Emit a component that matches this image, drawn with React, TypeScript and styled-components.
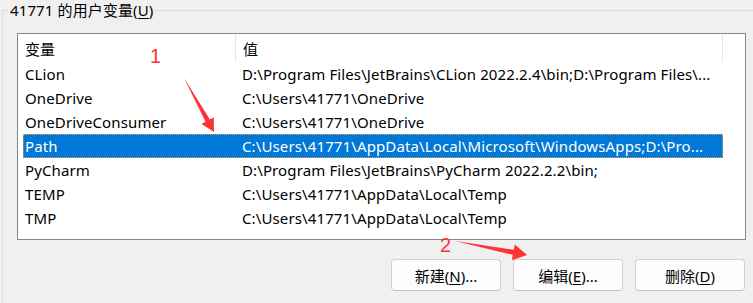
import styled, { createGlobalStyle } from 'styled-components'

const GlobalStyle = createGlobalStyle`
  html, body {
    margin: 0;
    padding: 0;
    background: #f0f0f0;
  }
  body {
    font-family: "Noto Sans", "Noto Sans CJK SC", sans-serif;
    font-size: 15px;
    letter-spacing: 0.12px;
    color: #000;
  }
`

const Page = styled.div`
  position: relative;
  width: 753px;
  height: 303px;
  overflow: hidden;
  background: #f0f0f0;
`

const GroupBox = styled.div`
  margin: 10px 0 0 2px;
  width: 800px;
  height: 300px;
  border-top: 1px solid #dcdcdc;
  border-left: 1px solid #dcdcdc;
`

const Legend = styled.div`
  width: fit-content;
  margin: -11px 0 0 5px;
  padding: 0 2px;
  height: 20px;
  line-height: 20px;
  background: #f0f0f0;
`

const Mnemonic = styled.span`
  text-decoration: underline;
  text-underline-offset: 2px;
`

const ListBox = styled.div`
  margin: 13px 0 0 14px;
  width: 727px;
  height: 205px;
  border: 1px solid #828790;
  background: #fff;
  overflow: hidden;
`

const HeaderRow = styled.div`
  display: flex;
  height: 28px;
  align-items: stretch;
`

const HeaderCell = styled.div<{ $width: number }>`
  width: ${(p) => p.$width}px;
  padding-left: 7px;
  box-sizing: border-box;
  display: flex;
  align-items: center;
  border-right: 1px solid #e5e5e5;
  margin-top: 1px;
`

const Rows = styled.div`
  display: flex;
  flex-direction: column;
  margin-left: 5px;
  width: 700px;
`

const Row = styled.div<{ $selected?: boolean }>`
  display: flex;
  height: 24px;
  align-items: center;
  white-space: nowrap;
  box-sizing: border-box;
  background: ${(p) => (p.$selected ? '#0078d7' : 'transparent')};
  color: ${(p) => (p.$selected ? '#fff' : '#000')};
  outline: ${(p) => (p.$selected ? '1px dotted #f2a03c' : 'none')};
  outline-offset: -1px;
`

const NameCell = styled.div`
  width: 219px;
  padding-left: 2px;
  box-sizing: border-box;
  flex-shrink: 0;
`

const ValueCell = styled.div`
  flex: 1;
  overflow: hidden;
`

const ButtonBar = styled.div`
  display: flex;
  justify-content: flex-end;
  gap: 12px;
  margin-top: 19px;
  width: 742px;
`

const Button = styled.button`
  width: 110px;
  height: 32px;
  padding: 0;
  border: 1px solid #d0d0d0;
  border-bottom-color: #c2c2c2;
  border-radius: 4px;
  background: #fdfdfd;
  font-family: "Noto Sans", "Noto Sans CJK SC", sans-serif;
  font-size: 15px;
  color: #000;
`

const Overlay = styled.svg`
  position: absolute;
  left: 0;
  top: 0;
  pointer-events: none;
`

const vars = [
  { name: 'CLion', value: 'D:\\Program Files\\JetBrains\\CLion 2022.2.4\\bin;D:\\Program Files\\...' },
  { name: 'OneDrive', value: 'C:\\Users\\41771\\OneDrive' },
  { name: 'OneDriveConsumer', value: 'C:\\Users\\41771\\OneDrive' },
  { name: 'Path', value: 'C:\\Users\\41771\\AppData\\Local\\Microsoft\\WindowsApps;D:\\Pro...', selected: true },
  { name: 'PyCharm', value: 'D:\\Program Files\\JetBrains\\PyCharm 2022.2.2\\bin;' },
  { name: 'TEMP', value: 'C:\\Users\\41771\\AppData\\Local\\Temp' },
  { name: 'TMP', value: 'C:\\Users\\41771\\AppData\\Local\\Temp' },
]

export default function App() {
  return (
    <Page>
      <GlobalStyle />
      <GroupBox>
        <Legend>
          41771 的用户变量(<Mnemonic>U</Mnemonic>)
        </Legend>
        <ListBox>
          <HeaderRow>
            <HeaderCell $width={218}>变量</HeaderCell>
            <HeaderCell $width={487}>值</HeaderCell>
          </HeaderRow>
          <Rows>
            {vars.map((v) => (
              <Row key={v.name} $selected={v.selected}>
                <NameCell>{v.name}</NameCell>
                <ValueCell>{v.value}</ValueCell>
              </Row>
            ))}
          </Rows>
        </ListBox>
        <ButtonBar>
          <Button>
            新建(<Mnemonic>N</Mnemonic>)...
          </Button>
          <Button>
            编辑(<Mnemonic>E</Mnemonic>)...
          </Button>
          <Button>
            删除(<Mnemonic>D</Mnemonic>)
          </Button>
        </ButtonBar>
      </GroupBox>
      <Overlay width="753" height="303" viewBox="0 0 753 303">
        <text x="150" y="63" fill="#f33" fontSize="20" fontFamily="Liberation Sans, sans-serif">
          1
        </text>
        <polygon
          points="184,78 209.9,119.4 213.8,117.2 214,132 201.6,124 205.5,121.8"
          fill="#f33"
        />
        <text x="440" y="252" fill="#f33" fontSize="20" fontFamily="Liberation Sans, sans-serif">
          2
        </text>
        <polygon
          points="455,241 513.8,249.8 514.8,244.4 527,255 511.8,260.2 512.8,254.8"
          fill="#f33"
        />
      </Overlay>
    </Page>
  )
}
